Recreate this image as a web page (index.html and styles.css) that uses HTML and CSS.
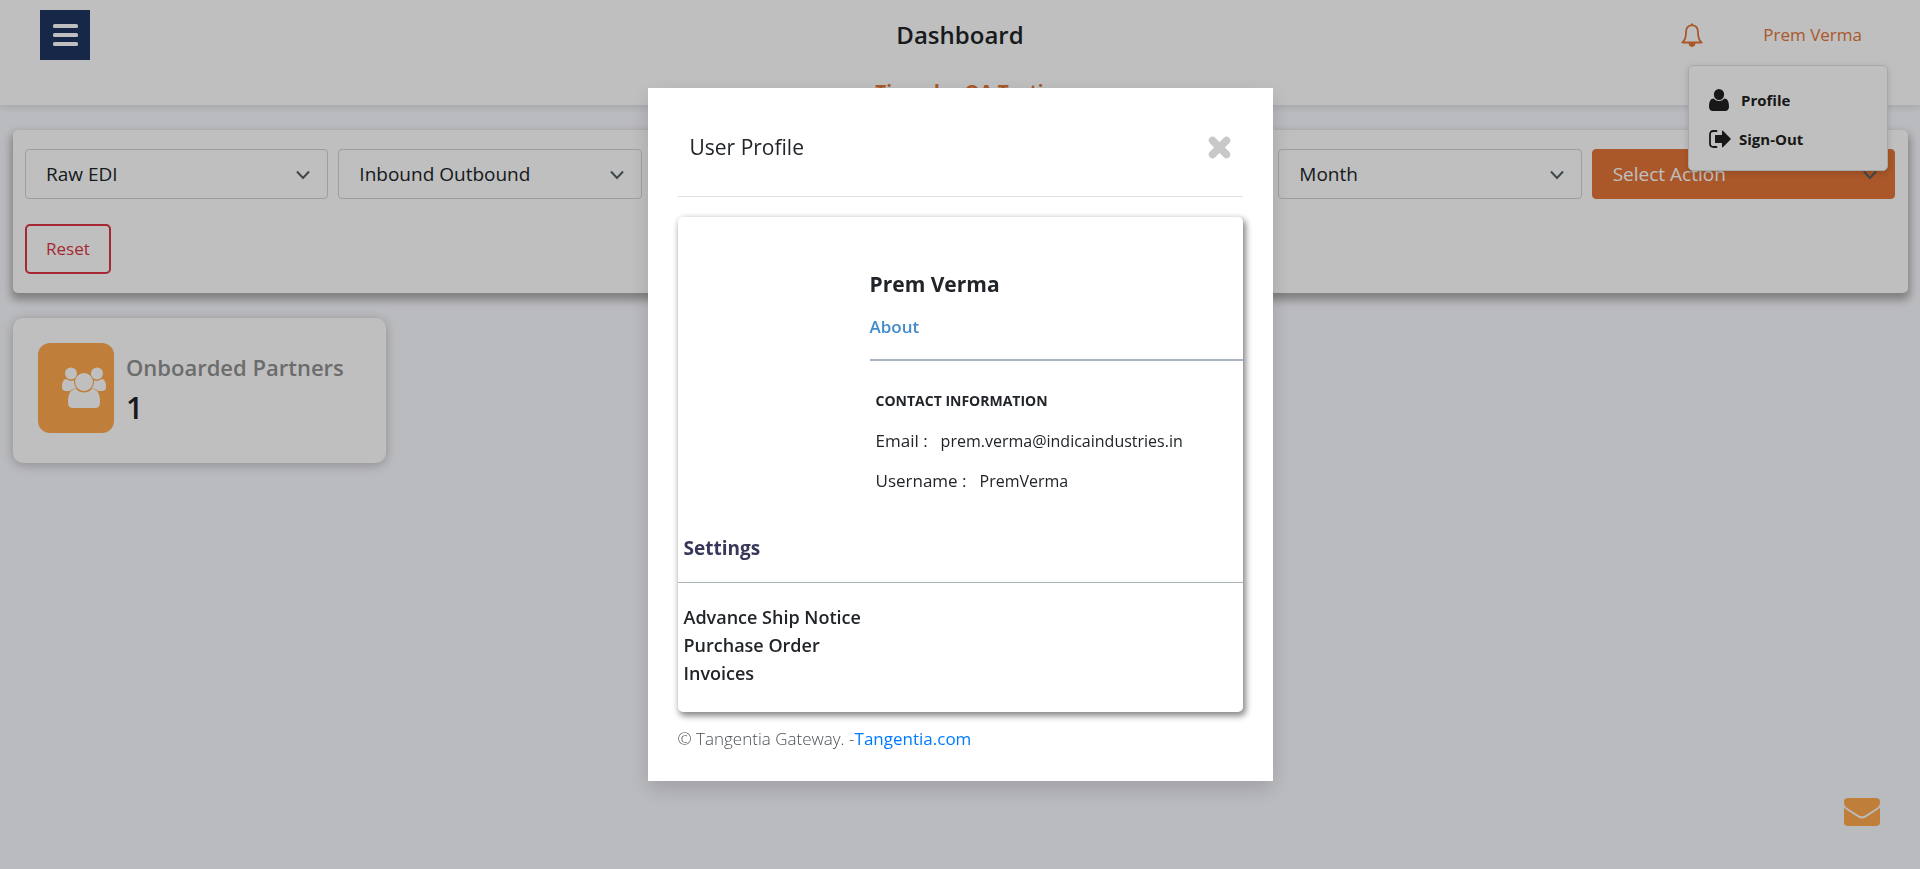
FILE: index.html
```html
<!DOCTYPE html>
<html lang="en">
<head>
<meta charset="utf-8">
<title>Dashboard</title>
<link rel="stylesheet" href="styles.css">
</head>
<body>
<header class="topbar">
  <div class="topbar-row">
    <button class="menu-button" type="button" aria-label="Menu">
      <svg width="25" height="22" viewBox="0 0 25 22" fill="currentColor"><rect width="25" height="4" rx="1.5"/><rect y="9" width="25" height="4" rx="1.5"/><rect y="18" width="25" height="4" rx="1.5"/></svg>
    </button>
    <h1 class="page-title">Dashboard</h1>
    <div class="account">
      <a class="bell" href="#" aria-label="Notifications">
        <svg width="22" height="24" viewBox="0 0 22 24" fill="none" stroke="currentColor" stroke-width="1.8" stroke-linejoin="round"><path d="M11 2.2C7 2.6 5 5.6 5 9.4C5 14.4 4 17.2 1.4 19.5H20.6C18 17.2 17 14.4 17 9.4C17 5.6 15 2.6 11 2.2Z"/><path d="M11 2.2V.5"/><path d="M8.5 20.5C8.7 22.2 9.7 23 11 23S13.300 22.200 13.500 20.500Z" fill="currentColor"/></svg>
      </a>
      <a class="account-name" href="#">Prem Verma</a>
      <nav class="account-menu">
        <a class="account-item wide" href="#">
          <svg width="20" height="22" viewBox="0 0 20 22" fill="currentColor"><ellipse cx="10" cy="5.500" rx="5.100" ry="5.500"/><path d="M4.600 9.500C1.500 9.500 0 13 0 17.500C0 20.500 1.600 22 4 22H16C18.400 22 20 20.500 20 17.500C20 13 18.500 9.500 15.400 9.500C13.900 11.200 12 12 10 12S6.100 11.200 4.600 9.500Z"/></svg>
          Profile
        </a>
        <a class="account-item" href="#">
          <svg width="22" height="18" viewBox="0 0 22 18" fill="currentColor"><path d="M7.500 1H4.500Q1 1 1 4.500V13.500Q1 17 4.500 17H7.500" fill="none" stroke="currentColor" stroke-width="1.800" stroke-linecap="round"/><path d="M6 5.500Q6 5 6.500 5H13V1.200Q13 .2 13.900 .8L21.600 8.400Q22 9 21.600 9.600L13.900 17.200Q13 17.800 13 16.800V13H6.500Q6 13 6 12.500Z"/></svg>
          Sign-Out
        </a>
      </nav>
    </div>
  </div>
  <p class="company">Tigunder QA Testing</p>
</header>

<main class="content">
  <form class="filters">
    <div class="filter"><select class="filter-select" aria-label="Document type"><option>Raw EDI</option></select><svg class="chevron" viewBox="0 0 14 10"><path d="M1 1.500L7 8L13 1.500"/></svg></div>
    <div class="filter"><select class="filter-select" aria-label="Direction"><option>Inbound Outbound</option></select><svg class="chevron" viewBox="0 0 14 10"><path d="M1 1.500L7 8L13 1.500"/></svg></div>
    <div class="filter period"><select class="filter-select" aria-label="Period"><option>Month</option></select><svg class="chevron" viewBox="0 0 14 10"><path d="M1 1.500L7 8L13 1.500"/></svg></div>
    <div class="filter"><select class="filter-select action" aria-label="Action"><option>Select Action</option></select><svg class="chevron" viewBox="0 0 14 10"><path d="M1 1.500L7 8L13 1.500"/></svg></div>
    <button class="reset" type="reset">Reset</button>
  </form>
  <section class="stat">
    <div class="stat-icon">
      <svg width="44" height="42" viewBox="0 0 44 42" fill="currentColor"><circle cx="9" cy="6.500" r="6"/><circle cx="35" cy="6.500" r="6"/><path d="M4.500 12Q9 15.500 12 13Q11.500 19 15 21.500Q10 21 8 24H4Q0 24 0 20Q0 12 4.500 12Z"/><path d="M39.500 12Q35 15.500 32 13Q32.500 19 29 21.500Q34 21 36 24H40Q44 24 44 20Q44 12 39.500 12Z"/><circle cx="22" cy="15" r="9"/><path d="M14 22Q17.500 25.500 22 25.500T30 22Q38 22 38 35.500Q38 41 33 41H11Q6 41 6 35.500Q6 22 14 22Z"/></svg>
    </div>
    <div>
      <h2 class="stat-title">Onboarded Partners</h2>
      <p class="stat-value">1</p>
    </div>
  </section>
</main>

<button class="mail" type="button" aria-label="Contact">
  <svg width="36" height="28" viewBox="0 0 36 28" fill="currentColor"><path d="M4 0H32Q36 0 36 4C36 7 35 8.500 33 10L21 17.500Q18 19.200 15 17.500L3 10C1 8.500 0 7 0 4Q0 0 4 0Z"/><path d="M0 9.500Q1 10.800 2.500 11.800L14.500 19.500Q18 21.500 21.500 19.500L33.500 11.800Q35 10.800 36 9.500V24Q36 28 32 28H4Q0 28 0 24Z"/></svg>
</button>

<div class="backdrop">
  <div class="dialog" role="dialog" aria-modal="true" aria-labelledby="dialog-title">
    <div class="dialog-head">
      <h2 class="dialog-title" id="dialog-title">User Profile</h2>
      <button class="close" type="button" aria-label="Close">
        <svg width="23" height="23" viewBox="0 0 23 23" fill="none" stroke="currentColor" stroke-width="7.500" stroke-linecap="round"><path d="M4.500 4.500L18.500 18.500M18.500 4.500L4.500 18.500"/></svg>
      </button>
    </div>
    <div class="profile">
      <div class="person">
        <h3 class="person-name">Prem Verma</h3>
        <p class="tab">About</p>
        <div class="contact">
          <h4 class="contact-title">CONTACT INFORMATION</h4>
          <p class="contact-row"><span>Email :</span><span class="contact-value">prem.verma@indicaindustries.in</span></p>
          <p class="contact-row"><span>Username :</span><span class="contact-value">PremVerma</span></p>
        </div>
      </div>
      <h3 class="settings-title">Settings</h3>
      <ul class="settings">
        <li>Advance Ship Notice</li>
        <li>Purchase Order</li>
        <li>Invoices</li>
      </ul>
    </div>
    <p class="footer">© Tangentia Gateway. -<a class="footer-link" href="#">Tangentia.com</a></p>
  </div>
</div>
</body>
</html>
```

FILE: styles.css
```css
* { box-sizing: border-box; }

body {
  margin: 0;
  min-height: 100vh;
  background: #f9faff;
  color: #212529;
  font: 400 17px/24px "Open Sans", "Noto Sans", sans-serif;
}

h1, h2, h3, h4, p, ul { margin: 0; padding: 0; }
a { text-decoration: none; }
svg { display: block; flex: none; }
button { font: inherit; cursor: pointer; }

.topbar {
  height: 105px;
  padding: 10px 40px 0;
  background: #fff;
  box-shadow: 0 2px 8px rgba(0, 0, 0, .12);
}
.topbar-row {
  display: grid;
  grid-template-columns: 1fr auto 1fr;
  align-items: center;
}
.menu-button {
  display: grid;
  place-items: center;
  width: 50px;
  height: 50px;
  padding: 0;
  border: 0;
  background: #1f3560;
  color: #fff;
}
.page-title { font-size: 24px; font-weight: 600; line-height: 50px; }
.company {
  margin-top: 20px;
  padding-left: 22px;
  color: #e37537;
  font-size: 19px;
  font-weight: 700;
  text-align: center;
}

.account {
  position: relative;
  display: flex;
  justify-content: flex-end;
  align-items: center;
  gap: 60px;
  padding-right: 18px;
}
.bell, .account-name { color: #e37537; }
.account-menu {
  position: absolute;
  top: 42px;
  right: -8px;
  z-index: 1;
  width: 200px;
  padding: 20px 20px 12px;
  border: 1px solid #dee2e6;
  border-radius: 5px;
  background: #fff;
  box-shadow: 0 2px 6px rgba(0, 0, 0, .15);
}
.account-item {
  display: flex;
  align-items: center;
  gap: 8px;
  height: 39px;
  margin-top: -6px;
  color: #212121;
  font-size: 15px;
  font-weight: 700;
}
.account-item + .account-item { margin-top: 0; }
.account-item.wide { gap: 12px; }

.content { padding: 25px 12px 25px 13px; }
.filters {
  display: grid;
  grid-template-columns: repeat(6, 1fr);
  gap: 25px 10px;
  margin: 0 0 25px;
  padding: 19px 13px 19px 12px;
  border-radius: 5px;
  background: #fff;
  box-shadow: 0 5px 8px 2px #aaa;
}
.filter { position: relative; }
.period { grid-column: 5; }
.filter-select {
  appearance: none;
  width: 100%;
  height: 50px;
  padding: 0 20px;
  border: 1px solid #ced4da;
  border-radius: 4px;
  background: #fff;
  color: #212529;
  font: inherit;
  font-size: 19px;
}
.filter-select.action { border-color: #e37537; background: #e37537; color: #fff; }
.chevron {
  position: absolute;
  top: 21px;
  right: 18px;
  width: 14px;
  height: 10px;
  fill: none;
  stroke: #566068;
  stroke-width: 2;
  pointer-events: none;
}
.reset {
  justify-self: start;
  height: 50px;
  padding: 0 19px;
  border: 2px solid #dc3545;
  border-radius: 5px;
  background: #fff;
  color: #dc3545;
  font-size: 17px;
}

.stat {
  display: flex;
  gap: 12px;
  width: 373px;
  height: 145px;
  padding: 25px;
  border-radius: 10px;
  background: #fff;
  box-shadow: 0 2px 12px rgba(0, 0, 0, .25);
}
.stat-icon {
  display: grid;
  place-items: center end;
  width: 76px;
  height: 90px;
  padding-right: 8px;
  border-radius: 12px;
  background: #ffa94d;
  color: #fff;
}
.stat-title { padding-top: 8px; color: #909090; font-size: 22px; font-weight: 600; line-height: 32px; }
.stat-value { font-size: 30px; font-weight: 600; line-height: 50px; }

.mail {
  position: fixed;
  right: 40px;
  bottom: 43px;
  padding: 0;
  border: 0;
  background: none;
  color: #ffa94d;
}

.backdrop {
  position: fixed;
  inset: 0;
  z-index: 2;
  display: grid;
  place-items: center;
  background: rgba(0, 0, 0, .25);
}
.dialog {
  width: 625px;
  max-width: 100%;
  padding: 20px 30px;
  background: #fff;
  box-shadow: 0 8px 20px rgba(0, 0, 0, .15);
}
.dialog-head {
  display: flex;
  justify-content: space-between;
  align-items: center;
  height: 89px;
  margin-bottom: 20px;
  padding: 0 12px 10px;
  border-bottom: 1px solid #dee2e6;
}
.dialog-title { font-size: 21px; font-weight: 400; }
.close { padding: 0; border: 0; background: none; color: #c8c8c8; }

.profile {
  padding: 52px 0 25px;
  border-radius: 5px;
  box-shadow: 2px 3px 6px 1px #888;
}
.person { margin-left: 192px; }
.person-name { font-size: 21px; font-weight: 700; line-height: 30px; }
.tab {
  height: 62px;
  padding-top: 16px;
  border-bottom: 2px solid #a9b5c0;
  color: #428bca;
  font-size: 17px;
  font-weight: 600;
}
.contact { padding: 20px 6px 0; }
.contact-title { font-size: 14px; font-weight: 700; line-height: 40px; }
.contact-row { display: flex; gap: 13px; font-size: 17px; line-height: 40px; }
.contact-value { font-size: 16px; }
.settings-title {
  height: 70px;
  margin-top: 12px;
  padding: 23px 6px 0;
  border-bottom: 1px solid #a9b5b8;
  color: #37375a;
  font-size: 19px;
  font-weight: 700;
}
.settings { padding: 20px 6px 0; font-size: 18px; font-weight: 600; line-height: 28px; list-style: none; }
.footer { padding: 15px 0 10px; color: #495057; font-size: 17px; font-weight: 300; }
.footer-link { color: #007bff; font-weight: 400; }
```
